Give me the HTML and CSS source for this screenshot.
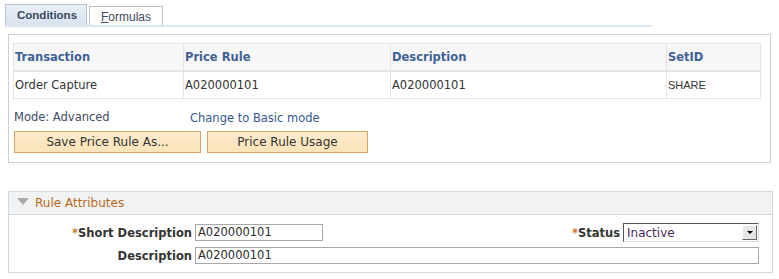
FILE: index.html
```html
<!DOCTYPE html>
<html lang="en">
<head>
    <meta charset="UTF-8">
    <title>Price Rule</title>
    <link rel="stylesheet" href="styles.css">
</head>
<body>

    <!-- Zakładki -->
    <div class="tabs">
        <span class="tab tab-active">Conditions</span>
        <span class="tab"><u>F</u>ormulas</span>
    </div>

    <!-- Warunki -->
    <div class="box">
        <table class="grid">
            <tr>
                <th class="col-trans">Transaction</th>
                <th class="col-rule">Price Rule</th>
                <th class="col-desc">Description</th>
                <th>SetID</th>
            </tr>
            <tr>
                <td>Order Capture</td>
                <td>A020000101</td>
                <td>A020000101</td>
                <td class="arial">SHARE</td>
            </tr>
        </table>

        <div class="mode-row">
            <span class="mode">Mode: Advanced</span>
            <a class="link" href="#">Change to Basic mode</a>
        </div>

        <div class="buttons">
            <button class="btn btn-save">Save Price Rule As...</button>
            <button class="btn btn-usage">Price Rule Usage</button>
        </div>
    </div>

    <!-- Atrybuty reguły -->
    <div class="section">
        <div class="section-head">
            <span class="arrow"></span>
            <span class="section-title">Rule Attributes</span>
        </div>
        <div class="section-body">
            <label class="label"><span class="req">*</span>Short Description</label>
            <div class="input input-short">A020000101</div>
            <div class="status">
                <label class="label"><span class="req">*</span>Status</label>
                <div class="select">
                    <span>Inactive</span>
                    <span class="select-btn"><span class="select-arrow"></span></span>
                </div>
            </div>

            <label class="label">Description</label>
            <div class="input input-long">A020000101</div>
        </div>
    </div>

</body>
</html>
```

FILE: styles.css
```css
body {
    margin: 0;
    font-family: "DejaVu Sans", Verdana, sans-serif;
    font-size: 11.5px;
    color: #333;
    background: #fff;
}

/* Zakładki */
.tabs {
    display: flex;
    align-items: flex-end;
    gap: 2px;
    margin: 4px 0 0 5px;
    width: 647px;
    border-bottom: 2px solid #dce6f2;
}

.tab {
    box-sizing: border-box;
    height: 19px;
    padding: 0 11px;
    border: 1px solid #b8c1cd;
    border-bottom: none;
    background: #fff;
    font-family: "Liberation Sans", Arial, sans-serif;
    font-size: 12px;
    line-height: 20px;
    color: #3c4a5a;
}

.tab-active {
    height: 21px;
    width: 82px;
    border-color: #b5c3d3;
    background: linear-gradient(#e9eff6, #d8e3f0);
    font-weight: bold;
    font-size: 11.5px;
    line-height: 21px;
    color: #37495e;
}

/* Główne pudełko */
.box {
    box-sizing: border-box;
    width: 763px;
    height: 129px;
    margin: 7px 0 0 8px;
    padding: 8px 9px 0 4px;
    border: 1px solid #c9d0d8;
}

.grid {
    width: 748px;
    border-collapse: collapse;
}

.grid th,
.grid td {
    height: 26px;
    padding: 0 1px;
    border: 1px solid #e4e4e4;
    text-align: left;
    vertical-align: middle;
}

.grid th {
    background: #f7f7f7;
    border-bottom: 2px solid #e4e4e4;
    color: #3e6294;
    font-weight: bold;
}

.col-trans { width: 167px; }
.col-rule { width: 204px; }
.col-desc { width: 273px; }

.arial {
    font-family: "Liberation Sans", Arial, sans-serif;
    font-size: 11px;
}

.mode-row {
    display: flex;
    height: 18px;
    margin-top: 9px;
    padding-left: 1px;
    align-items: center;
}

.mode {
    width: 176px;
    color: #3c4c66;
}

.link {
    margin-top: 2px;
    color: #34598f;
    text-decoration: none;
}

.buttons {
    display: flex;
    gap: 6px;
    margin-top: 5px;
    padding-left: 1px;
}

.btn {
    height: 22px;
    padding: 0;
    border: 1px solid #d9a46a;
    background: linear-gradient(#fdebcc, #fce3b8);
    font-family: "DejaVu Sans", Verdana, sans-serif;
    font-size: 12px;
    color: #333;
}

.btn-save { width: 187px; }
.btn-usage { width: 161px; }

/* Sekcja atrybutów */
.section {
    width: 765px;
    margin: 28px 0 0 8px;
}

.section-head {
    display: flex;
    align-items: center;
    box-sizing: border-box;
    height: 24px;
    border: 1px solid #d3d8dd;
    background: #f0f2f4;
}

.arrow {
    width: 0;
    height: 0;
    margin: 0 6px 4px 8px;
    border-left: 6px solid transparent;
    border-right: 6px solid transparent;
    border-top: 7px solid #a9a9a9;
}

.section-title {
    font-size: 12px;
    color: #bb6a1c;
}

.section-body {
    display: grid;
    grid-template-columns: 186px 128px 1fr;
    row-gap: 5px;
    align-items: center;
    align-content: start;
    height: 58px;
    box-sizing: border-box;
    padding: 8px 13px 0 0;
    border: 1px solid #d3d8dd;
    border-top: none;
}

.label {
    padding-right: 3px;
    text-align: right;
    font-weight: bold;
    color: #333;
}

.req {
    color: #c57a2b;
}

.input {
    box-sizing: border-box;
    height: 17px;
    padding-left: 2px;
    border: 1px solid #a9a9a9;
    line-height: 15px;
    color: #2c2c2c;
}

.input-long {
    grid-column: 2 / 4;
}

.status {
    display: flex;
    justify-content: flex-end;
    align-items: center;
}

.select {
    display: flex;
    justify-content: space-between;
    align-items: center;
    box-sizing: border-box;
    width: 136px;
    height: 19px;
    padding-left: 3px;
    border: 1px solid;
    border-color: #555 #ddd #ddd #555;
    font-size: 12px;
    color: #4a2c5a;
}

.select-btn {
    display: flex;
    align-items: center;
    justify-content: center;
    width: 15px;
    height: 15px;
    margin-right: 1px;
    background: #e6e6e6;
    border: 1px solid;
    border-color: #fff #666 #666 #fff;
    box-sizing: border-box;
}

.select-arrow {
    width: 0;
    height: 0;
    border-left: 3px solid transparent;
    border-right: 3px solid transparent;
    border-top: 3px solid #000;
}
```
